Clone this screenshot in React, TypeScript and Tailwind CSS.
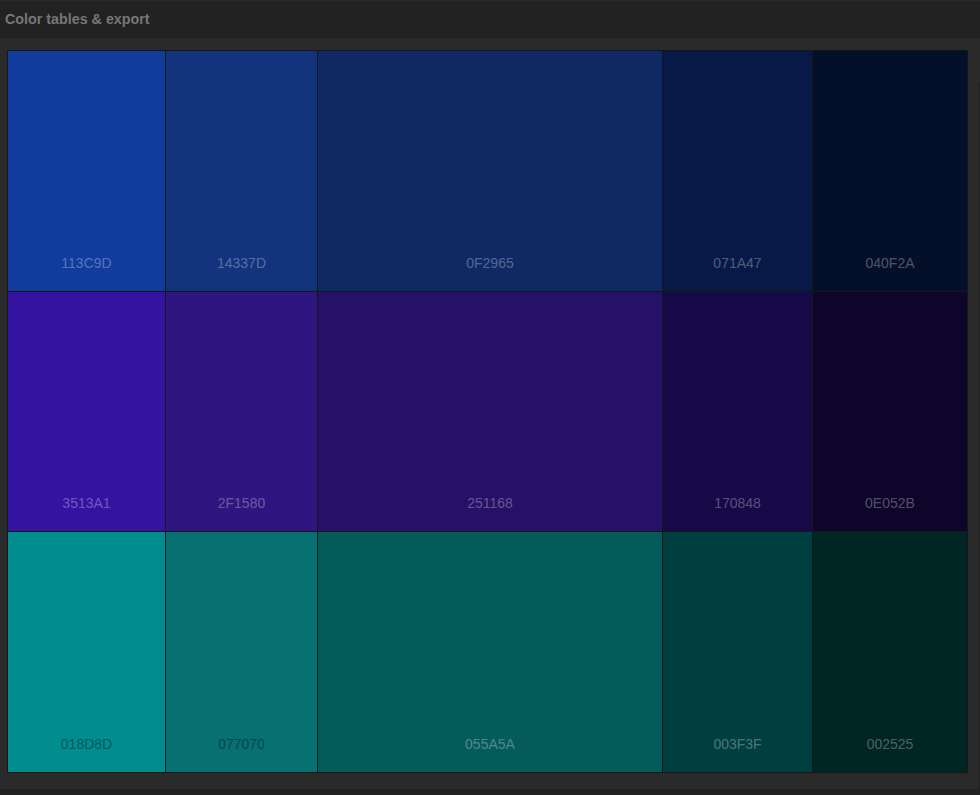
import React from "react";

type Cell = { hex: string; dark: boolean };

const rows: Cell[][] = [
  [
    { hex: "113C9D", dark: false },
    { hex: "14337D", dark: false },
    { hex: "0F2965", dark: false },
    { hex: "071A47", dark: false },
    { hex: "040F2A", dark: false },
  ],
  [
    { hex: "3513A1", dark: false },
    { hex: "2F1580", dark: false },
    { hex: "251168", dark: false },
    { hex: "170848", dark: false },
    { hex: "0E052B", dark: false },
  ],
  [
    { hex: "018D8D", dark: true },
    { hex: "077070", dark: true },
    { hex: "055A5A", dark: false },
    { hex: "003F3F", dark: false },
    { hex: "002525", dark: false },
  ],
];

export default function App() {
  return (
    <div
      className="w-[980px] h-[795px] flex flex-col bg-[#222222] overflow-hidden"
      style={{ fontFamily: '"Liberation Sans", Arial, sans-serif' }}
    >
      <div className="h-[38px] shrink-0 border-t border-[#282828] bg-[#222222] flex items-center pl-[5px] pt-[1px]">
        <span className="text-[14.3px] font-bold text-[#777777]">Color tables &amp; export</span>
      </div>
      <div className="h-[751px] shrink-0 flex bg-[#2a2a2a]">
        <div className="flex-1 pl-[7px] pt-[12px]">
          <div className="grid grid-cols-[157px_151px_344px_149px_154px] grid-rows-[240px_239px_240px] gap-px p-px bg-[#161616] w-[961px]">
            {rows.flat().map((c) => (
              <div
                key={c.hex}
                className="flex items-end justify-center pb-[20px]"
                style={{ backgroundColor: `#${c.hex}` }}
              >
                <span
                  className={
                    "text-[14px] leading-[16px] " +
                    (c.dark ? "text-black/40" : "text-white/30")
                  }
                >
                  {c.hex}
                </span>
              </div>
            ))}
          </div>
        </div>
        <div className="w-px mt-[45px] bg-[#222222]" />
      </div>
    </div>
  );
}
